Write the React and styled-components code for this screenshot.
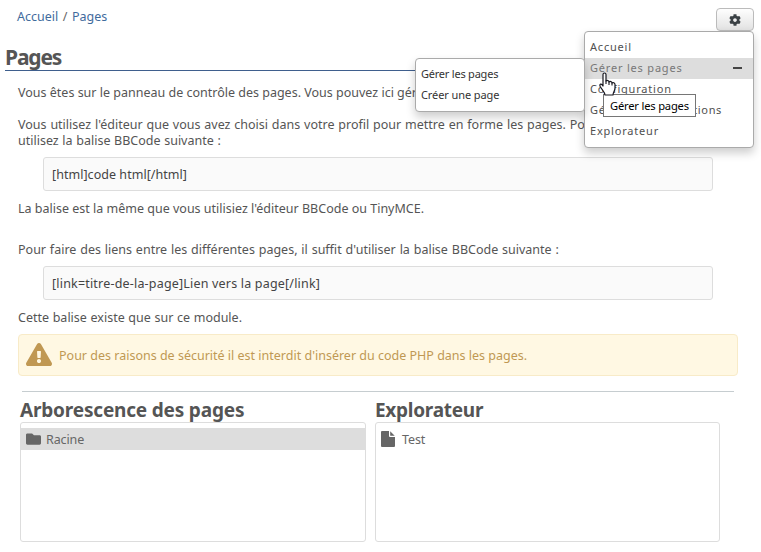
import React from "react";
import styled, { createGlobalStyle } from "styled-components";
import { FaCog, FaFolder, FaExclamationTriangle } from "react-icons/fa";

const GlobalStyle = createGlobalStyle`
  * { box-sizing: border-box; }
  html, body { margin: 0; background: #fff; overflow: hidden; }
  body { font-family: "Noto Sans", sans-serif; font-size: 12.5px; line-height: 16px; color: #555; }
`;

const Page = styled.div`
  width: 761px;
  height: 552px;
  overflow: hidden;
  padding: 8px 7px 0 5px;
`;

const TopBar = styled.header`
  display: flex;
  justify-content: space-between;
  align-items: flex-start;
  height: 37px;
`;

const Breadcrumb = styled.nav`
  display: flex;
  gap: 4.500px;
  padding-left: 12px;
  line-height: 18px;
  color: #666;
`;

const Crumb = styled.a`
  color: #3f6b9d;
  text-decoration: none;
`;

const ActionMenu = styled.div`
  position: relative;
  z-index: 2;
`;

const GearButton = styled.button`
  display: flex;
  align-items: center;
  justify-content: center;
  width: 38px;
  height: 23px;
  padding: 0;
  border: 1px solid #bbb;
  border-radius: 4px;
  background: linear-gradient(#fefefe, #e2e2e2);
  color: #3b4145;
  font-size: 12px;
`;

const MenuPanel = styled.ul`
  position: absolute;
  top: ${(p) => p.$top}px;
  right: ${(p) => p.$right}px;
  width: 170px;
  margin: 0;
  padding: 5px 0;
  list-style: none;
  background: #fff;
  border: 1px solid #aaa;
  border-radius: 4px;
  box-shadow: 0 5px 10px rgba(0, 0, 0, 0.2);
`;

const MenuItem = styled.li`
  display: flex;
  align-items: center;
  justify-content: space-between;
  height: 21px;
  padding: 0 11px 2px 5px;
  white-space: nowrap;
  font-size: 11px;
  letter-spacing: ${(p) => p.$track ?? 0.8}px;
  color: ${(p) => (p.$active ? "#777" : p.$dark ? "#333" : "#505050")};
  background: ${(p) => (p.$active ? "#ddd" : "transparent")};
`;

const Dash = styled.span`
  width: 9px;
  height: 2px;
  background: #444;
`;

const Tooltip = styled.div`
  position: absolute;
  z-index: 3;
  top: 86px;
  right: 58px;
  height: 23px;
  width: 93px;
  padding-left: 6px;
  border: 1px solid #767676;
  background: #fff;
  color: #000;
  font-size: 11.2px;
  line-height: 21px;
  letter-spacing: -0.2px;
  white-space: nowrap;
`;

const Cursor = styled.svg`
  position: absolute;
  z-index: 4;
  top: 64px;
  right: 138px;
  width: 17px;
  height: 24px;
`;

const Title = styled.h1`
  height: 26px;
  margin: 0;
  border-bottom: 1px solid #3f5f8d;
  font-size: 21px;
  line-height: 24px;
  letter-spacing: -1.15px;
  color: #555;
`;

const Content = styled.main`
  padding: 14px 11px 0 13px;
`;

const Paragraph = styled.p`
  margin: 0 0 ${(p) => p.$gap}px;
  white-space: nowrap;
  word-spacing: ${(p) => p.$word || 0}px;
`;

const TextLine = styled.span`
  display: block;
  word-spacing: ${(p) => p.$word || 0}px;
`;

const CodeBlock = styled.pre`
  width: 670px;
  height: 34px;
  margin: 0 0 10px 25px;
  padding: 0 8px;
  border: 1px solid #ddd;
  border-radius: 3px;
  background: #fafafa;
  color: #444;
  font-family: inherit;
  line-height: 33px;
  letter-spacing: ${(p) => p.$track}px;
`;

const Warning = styled.div`
  display: flex;
  align-items: center;
  gap: 7px;
  width: 720px;
  height: 42px;
  padding: 2px 0 0 7px;
  border: 1px solid #f8ebc8;
  border-radius: 4px;
  background: #fff8e3;
  color: #c09853;
  white-space: nowrap;
`;

const WarningIcon = styled(FaExclamationTriangle)`
  width: 26px;
  height: 25px;
  margin-top: -4px;
`;

const Divider = styled.hr`
  width: 712px;
  height: 1px;
  margin: 15px 0 7px 4px;
  border: 0;
  background: #c6cdd0;
`;

const Columns = styled.div`
  display: grid;
  grid-template-columns: 346px 345px;
  gap: 9px;
  padding-left: 2px;
`;

const ColumnTitle = styled.h2`
  margin: 0;
  height: 23px;
  font-size: 19px;
  line-height: 23px;
  letter-spacing: ${(p) => p.$track}px;
  color: #555;
`;

const TreeBox = styled.div`
  height: 120px;
  padding-top: 5px;
  border: 1px solid #ddd;
  border-radius: 3px;
`;

const Entry = styled.div`
  display: flex;
  align-items: center;
  gap: ${(p) => p.$gap}px;
  height: 22px;
  padding: 1px 0 0 5px;
  background: ${(p) => (p.$selected ? "#ddd" : "transparent")};
  color: #666;
  letter-spacing: -0.1px;
`;

const EntryIcon = styled.span`
  display: flex;
  width: 15px;
  height: 16px;
  margin-top: -1px;
  font-size: 16px;
`;

const FileIcon = () => (
  <svg width="14" height="16" viewBox="0 0 14 16" fill="currentColor" aria-hidden="true">
    <path d="M1 0H8V5Q8 6 9 6H14V15Q14 16 13 16H1Q0 16 0 15V1Q0 0 1 0ZM9.200 0.300L13.700 4.800H9.200Z" />
  </svg>
);

const SectionMenu = () => (
  <ActionMenu>
    <GearButton aria-label="Options"><FaCog /></GearButton>
    <MenuPanel $top={23} $right={0}>
      <MenuItem>Accueil</MenuItem>
      <MenuItem $active>Gérer les pages<Dash /></MenuItem>
      <MenuItem>Configuration</MenuItem>
      <MenuItem $track={0.64}>Gérer les autorisations</MenuItem>
      <MenuItem>Explorateur</MenuItem>
    </MenuPanel>
    <MenuPanel $top={50} $right={169}>
      <MenuItem $dark $track={-0.22}>Gérer les pages</MenuItem>
      <MenuItem $dark $track={-0.1}>Créer une page</MenuItem>
    </MenuPanel>
    <Tooltip>Gérer les pages</Tooltip>
    <Cursor viewBox="0 0 17 24">
      <path
        d="M4 2.5C4 .5 7 .5 7 2.5V9C8 8 10 8.500 10 10C11 9 13 9.500 13 11C14 10 16 11 16 12.500V16C16 19 14 20 14 23H6C6 20 3 18 1.200 14.500C0 12 2.500 11 4 14Z"
        fill="#fff"
        stroke="#17171f"
        strokeWidth="1.2"
        strokeLinejoin="round"
      />
      <path d="M7 8.500V12M10 10V13M13 11V13.500" stroke="#17171f" strokeWidth="1.100" />
    </Cursor>
  </ActionMenu>
);

export default function App() {
  return (
    <>
      <GlobalStyle />
      <Page>
        <TopBar>
          <Breadcrumb>
            <Crumb>Accueil</Crumb>/<Crumb>Pages</Crumb>
          </Breadcrumb>
          <SectionMenu />
        </TopBar>
        <Title>Pages</Title>
        <Content>
          <Paragraph $gap={16}>
            Vous êtes sur le panneau de contrôle des pages. Vous pouvez ici gérer
          </Paragraph>
          <Paragraph $gap={8}>
            <TextLine $word={0.6}>
              Vous utilisez l'éditeur que vous avez choisi dans votre profil pour mettre en forme les pages. Pour
            </TextLine>
            <TextLine $word={0.4}>utilisez la balise BBCode suivante :</TextLine>
          </Paragraph>
          <CodeBlock $track={0.04}>[html]code html[/html]</CodeBlock>
          <Paragraph $gap={25}>La balise est la même que vous utilisiez l'éditeur BBCode ou TinyMCE.</Paragraph>
          <Paragraph $gap={8} $word={0.6}>
            Pour faire des liens entre les différentes pages, il suffit d'utiliser la balise BBCode suivante :
          </Paragraph>
          <CodeBlock $track={0.19}>[link=titre-de-la-page]Lien vers la page[/link]</CodeBlock>
          <Paragraph $gap={8} $word={0.4}>Cette balise existe que sur ce module.</Paragraph>
          <Warning>
            <WarningIcon />
            Pour des raisons de sécurité il est interdit d'insérer du code PHP dans les pages.
          </Warning>
          <Divider />
          <Columns>
            <section>
              <ColumnTitle $track={-0.18}>Arborescence des pages</ColumnTitle>
              <TreeBox>
                <Entry $selected $gap={5}>
                  <EntryIcon><FaFolder /></EntryIcon>Racine
                </Entry>
              </TreeBox>
            </section>
            <section>
              <ColumnTitle $track={-0.27}>Explorateur</ColumnTitle>
              <TreeBox>
                <Entry $gap={6}>
                  <EntryIcon><FileIcon /></EntryIcon>Test
                </Entry>
              </TreeBox>
            </section>
          </Columns>
        </Content>
      </Page>
    </>
  );
}
